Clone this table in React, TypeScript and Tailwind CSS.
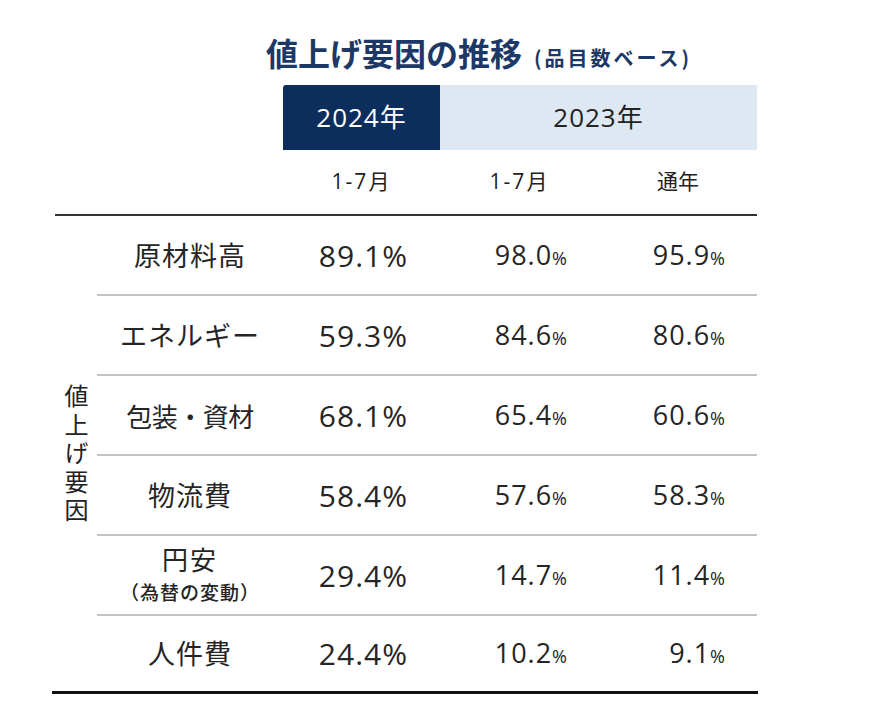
import React from "react";

const jp = "font-['Noto_Sans_CJK_JP',sans-serif]";
const num = "font-['Open_Sans','Noto_Sans_CJK_JP',sans-serif]";

type Row = { label: React.ReactNode; a: string; b: string; c: string };

const rows: Row[] = [
  { label: "原材料高", a: "89.1", b: "98.0", c: "95.9" },
  { label: "エネルギー", a: "59.3", b: "84.6", c: "80.6" },
  {
    label: <span className="text-[26px] tracking-[-0.5px]">包装・資材</span>,
    a: "68.1",
    b: "65.4",
    c: "60.6",
  },
  { label: "物流費", a: "58.4", b: "57.6", c: "58.3" },
  {
    label: (
      <div className="flex flex-col items-center">
        <span className="text-[26px] leading-[33px] tracking-[2px]">円安</span>
        <span className="text-[19px] leading-[33px] tracking-[1px] font-medium">（為替の変動）</span>
      </div>
    ),
    a: "29.4",
    b: "14.7",
    c: "11.4",
  },
  { label: "人件費", a: "24.4", b: "10.2", c: "9.1" },
];

function Small({ v }: { v: string }) {
  return (
    <div className={`${num} flex items-baseline justify-end pr-[32px] text-[#252525]`}>
      <span className="text-[27px] tracking-[1px]">{v}</span>
      <span className="text-[18px]">%</span>
    </div>
  );
}

export default function App() {
  return (
    <div className="w-[870px] h-[726px] bg-white overflow-hidden">
      <div className="pt-[32px] pl-[266px] flex items-baseline h-[72px]">
        <span className={`${jp} text-[32px] leading-[40px] font-bold text-[#1c3866]`}>値上げ要因の推移</span>
        <span className={`${jp} ml-[12px] text-[20px] leading-[40px] font-bold tracking-[3px] text-[#1c3866]`}>(品目数ベース)</span>
      </div>
      <div className="ml-[283px] mt-[13px] flex w-[474px] h-[65px]">
        <div className={`${num} w-[157px] bg-[#0c2e5c] text-white flex items-center justify-center text-[26px] tracking-[1px] rounded-tl-[3px]`}>
          2024年
        </div>
        <div className={`${num} flex-1 bg-[#dde8f3] text-[#222] flex items-center justify-center text-[26px] tracking-[1px]`}>
          2023年
        </div>
      </div>
      <div className={`${num} ml-[283px] grid grid-cols-[157px_159px_158px] h-[64px] items-center text-center text-[21px] text-[#222]`}>
        <span className="tracking-[2px]">1-7月</span>
        <span className="tracking-[2px]">1-7月</span>
        <span>通年</span>
      </div>
      <div className="ml-[55px] w-[702px] border-t-2 border-[#333] flex">
        <div className="w-[42px] flex items-center justify-center">
          <span className={`${jp} [writing-mode:vertical-rl] text-[24px] leading-[28px] tracking-[4.5px] text-[#222] pt-[4px]`}>
            値上げ要因
          </span>
        </div>
        <div className="flex-1 flex flex-col">
          {rows.map((r, i) => (
            <div
              key={i}
              className={`grid grid-cols-[186px_157px_159px_158px] items-center ${
                i < rows.length - 1 ? "h-[80px] border-b-2 border-[#c3c3c3]" : "h-[75px]"
              }`}
            >
              <div className={`${jp} text-center text-[27px] tracking-[1px] text-[#252525] flex justify-center`}>{r.label}</div>
              <div className={`${num} flex items-baseline justify-end pr-[32px] text-[#252525] text-[30px] tracking-[1px]`}>
                {r.a}%
              </div>
              <Small v={r.b} />
              <Small v={r.c} />
            </div>
          ))}
        </div>
      </div>
      <div className="ml-[52px] w-[706px] h-[3px] bg-[#111]" />
    </div>
  );
}
